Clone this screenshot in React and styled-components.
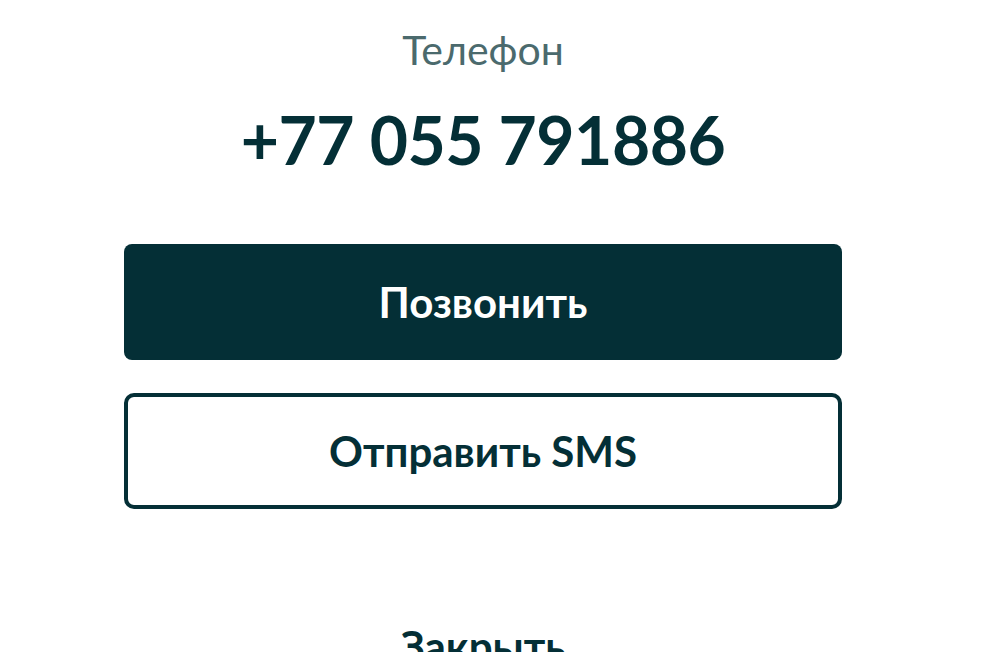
import React from 'react';
import styled, { createGlobalStyle } from 'styled-components';

const COLORS = {
  main: '#042f36',
  label: '#4b6a6d',
  back: '#ffffff',
};

const GlobalStyle = createGlobalStyle`
  html, body {
    margin: 0;
    padding: 0;
    background: ${COLORS.back};
    overflow: hidden;
  }
  body {
    font-family: Lato, "Noto Sans", sans-serif;
    color: ${COLORS.main};
  }
`;

const PhoneSheet = () => {
  return (
    <Container>
      <GlobalStyle />
      <Label>Телефон</Label>
      <Number>+77 055 791886</Number>
      <BtnBox>
        <CallBtn>Позвонить</CallBtn>
        <SmsBtn>Отправить SMS</SmsBtn>
      </BtnBox>
      <CloseBtn>Закрыть</CloseBtn>
    </Container>
  );
};
export default PhoneSheet;

const Container = styled.div`
  width: 718px;
  height: 652px;
  margin-left: 124px;
  display: flex;
  flex-direction: column;
  align-items: center;
`;

const Label = styled.p`
  margin: 24px 0 0 0;
  font-size: 41px;
  font-weight: 400;
  line-height: 52px;
  color: ${COLORS.label};
`;

const Number = styled.h1`
  margin: 22px 0 0 0;
  font-size: 66px;
  font-weight: 700;
  line-height: 84px;
  letter-spacing: -0.5px;
  color: ${COLORS.main};
`;

const BtnBox = styled.div`
  width: 100%;
  margin-top: 62px;
  display: flex;
  flex-direction: column;
  gap: 33px;
`;

const CallBtn = styled.button`
  display: block;
  width: 100%;
  height: 116px;
  border: none;
  border-radius: 8px;
  background-color: ${COLORS.main};
  color: ${COLORS.back};
  font-family: inherit;
  font-size: 42px;
  font-weight: 700;
`;

const SmsBtn = styled.button`
  display: block;
  width: 100%;
  height: 116px;
  border: 4px solid ${COLORS.main};
  border-radius: 10px;
  background-color: ${COLORS.back};
  color: ${COLORS.main};
  font-family: inherit;
  font-size: 42px;
  font-weight: 700;
`;

const CloseBtn = styled.button`
  margin-top: 112px;
  border: none;
  background: none;
  padding: 0;
  color: ${COLORS.main};
  font-family: inherit;
  font-size: 42px;
  font-weight: 700;
  line-height: 50px;
`;
